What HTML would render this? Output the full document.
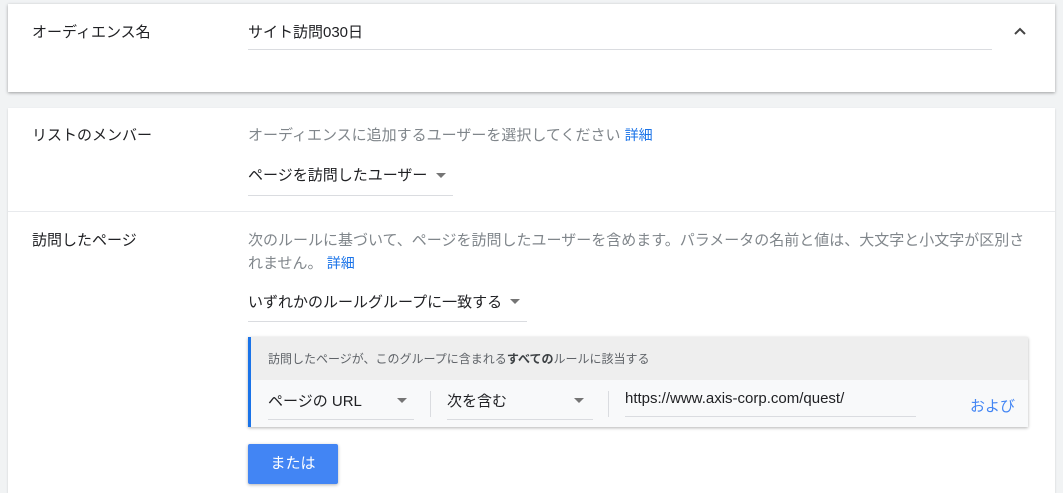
<!DOCTYPE html>
<html><head><meta charset="utf-8"><style>
html,body{margin:0;width:1063px;height:493px;overflow:hidden}
body{background:#f1f3f4;font-family:"Liberation Sans","Noto Sans CJK JP",sans-serif;position:relative;color:#202124}
.a{position:absolute;white-space:nowrap}
.card{position:absolute;left:8px;width:1047px;background:#fff}
.ln{position:absolute;height:1px;background:#dadce0}
.tri{position:absolute;width:0;height:0;border-left:5px solid transparent;border-right:5px solid transparent;border-top:5px solid #757575}
</style></head><body>
<div class="card" style="top:4px;height:88px;box-shadow:0 1px 3px rgba(0,0,0,.35)"></div>
<div class="a" style="left:32px;top:21px;font-size:15px">オーディエンス名</div>
<div class="a" style="left:248px;top:21px;font-size:15px">サイト訪問030日</div>
<div class="ln" style="left:248px;top:49px;width:744px"></div>
<svg class="a" style="left:1013px;top:26px" width="14" height="10"><path d="M2 8 L7 3 L12 8" stroke="#444" stroke-width="2" fill="none"/></svg>

<div class="card" style="top:108px;height:385px;box-shadow:0 1px 2px rgba(0,0,0,.15)"></div>
<div class="a" style="left:32px;top:124px;font-size:15px">リストのメンバー</div>
<div class="a" style="left:248px;top:124px;font-size:15px;color:#80868b">オーディエンスに追加するユーザーを選択してください <span style="color:#1a73e8;font-size:14px">詳細</span></div>
<div class="a" style="left:248px;top:164px;font-size:15px">ページを訪問したユーザー</div>
<div class="tri" style="left:436px;top:173px"></div>
<div class="ln" style="left:248px;top:195px;width:205px"></div>
<div class="ln" style="left:8px;top:211px;width:1047px;background:#e8eaed"></div>

<div class="a" style="left:32px;top:229px;font-size:15px">訪問したページ</div>
<div class="a" style="left:248px;top:230px;font-size:15px;color:#80868b;line-height:22px;white-space:normal;width:790px">次のルールに基づいて、ページを訪問したユーザーを含めます。パラメータの名前と値は、大文字と小文字が区別されません。 <span style="color:#1a73e8;font-size:14px">詳細</span></div>
<div class="a" style="left:248px;top:291px;font-size:15px">いずれかのルールグループに一致する</div>
<div class="tri" style="left:510px;top:299px"></div>
<div class="ln" style="left:248px;top:321px;width:279px"></div>

<div class="a" style="left:248px;top:337px;width:780px;height:90px;background:#f8f9fa;box-shadow:0 1px 3px rgba(0,0,0,.3);border-left:3px solid #1a73e8;box-sizing:border-box"></div>
<div class="a" style="left:251px;top:337px;width:777px;height:43px;background:#eeeeee"></div>
<div class="a" style="left:268px;top:350px;font-size:12px;color:#5f6368">訪問したページが、このグループに含まれる<b style="color:#3c4043">すべての</b>ルールに該当する</div>
<div class="a" style="left:268px;top:390px;font-size:15px">ページの URL</div>
<div class="tri" style="left:397px;top:398px"></div>
<div class="ln" style="left:268px;top:419px;width:146px"></div>
<div class="ln" style="left:430px;top:391px;width:1px;height:26px"></div>
<div class="a" style="left:447px;top:390px;font-size:15px">次を含む</div>
<div class="tri" style="left:574px;top:398px"></div>
<div class="ln" style="left:447px;top:419px;width:146px"></div>
<div class="ln" style="left:608px;top:391px;width:1px;height:26px"></div>
<div class="a" style="left:625px;top:390px;font-size:15px">https://www.axis-corp.com/quest/</div>
<div class="ln" style="left:625px;top:416px;width:291px"></div>
<div class="a" style="left:970px;top:395px;font-size:15px;color:#4285f4">および</div>

<div class="a" style="left:248px;top:444px;width:90px;height:40px;background:#4285f4;border-radius:2px;box-shadow:0 1px 3px rgba(0,0,0,.3);color:#fff;font-size:15px;line-height:40px;text-align:center">または</div>
</body></html>
